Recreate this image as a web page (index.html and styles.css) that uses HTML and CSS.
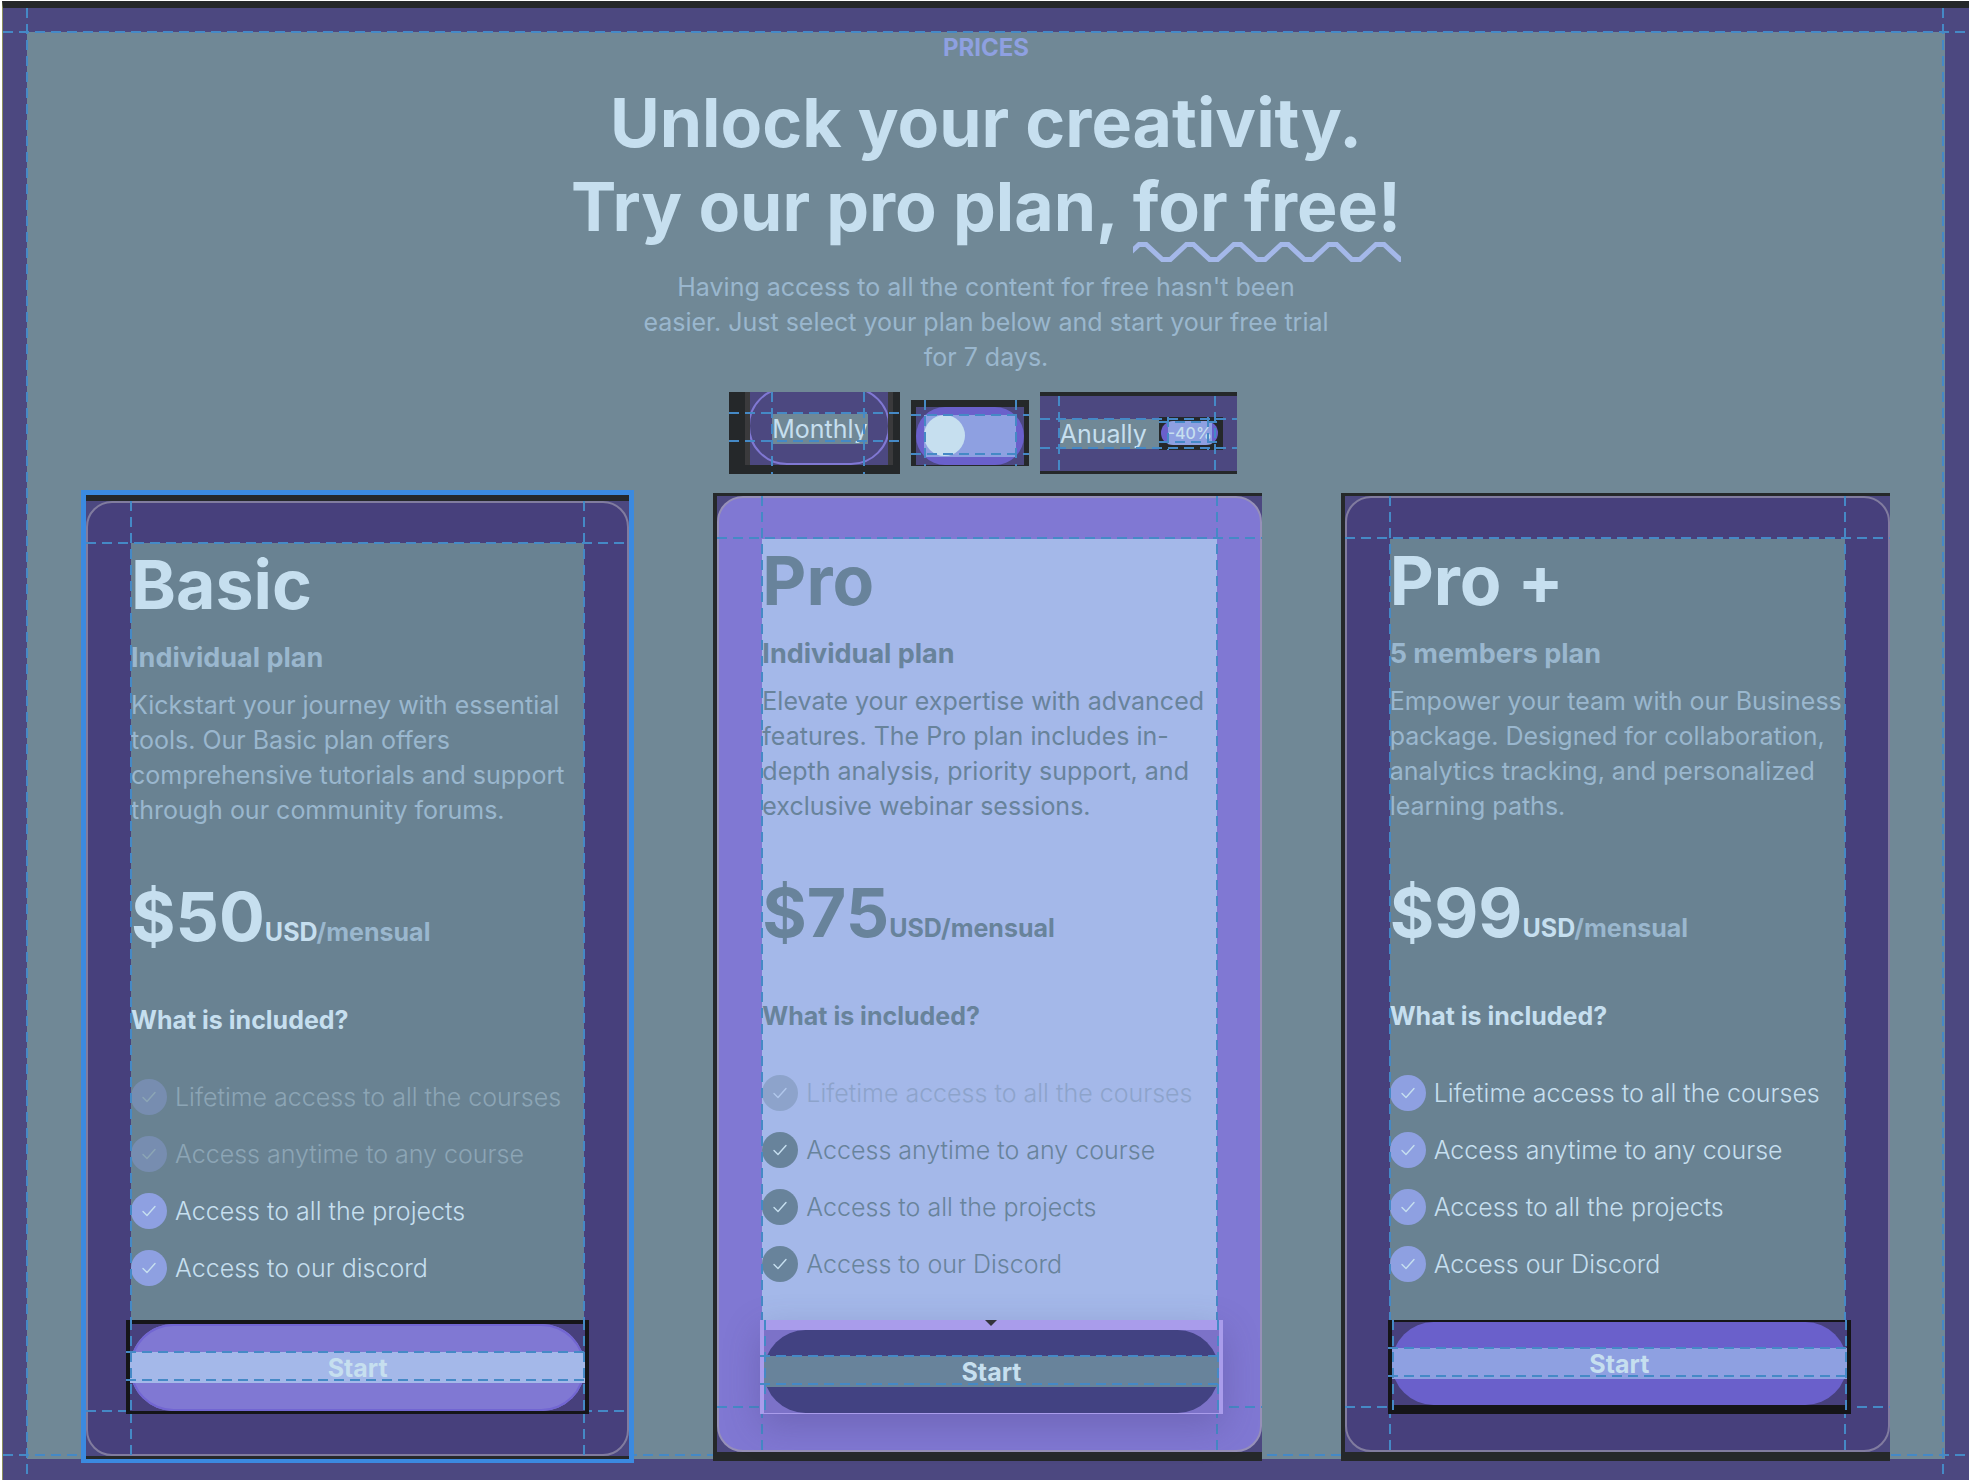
FILE: index.html
```html
<!DOCTYPE html>
<html lang="en">
<head>
<meta charset="utf-8">
<title>Prices</title>
<link rel="stylesheet" href="styles.css">
</head>
<body>
<svg class="defs" aria-hidden="true"><symbol id="check" viewBox="0 0 36 36"><path d="M12 18.5l4 4 8-9" fill="none" stroke="currentColor" stroke-width="1.4" stroke-linecap="round" stroke-linejoin="round"/></symbol></svg>
<main class="page guided">
  <div class="stage">
    <header class="intro">
      <p class="eyebrow">PRICES</p>
      <h1 class="headline">Unlock your creativity.<br>Try our pro plan, <span class="wavy">for free!<svg class="wave" viewBox="0 0 266 20" preserveAspectRatio="none" aria-hidden="true"><path d="M-18 17.500H-10L6 2.500H13L29 17.500H37L53 2.500H60L76 17.500H84L100 2.500H107L123 17.500H131L147 2.500H154L170 17.500H178L194 2.500H202L217 17.500H225L241 2.500H249L265 17.500H273" fill="none" stroke="#a4b8e9" stroke-width="5"/></svg></span></h1>
      <p class="lead">Having access to all the content for free hasn't been easier. Just select your plan below and start your free trial for 7 days.</p>
    </header>

    <div class="billing">
      <button type="button" class="period period-monthly guided"><span class="period-back"><span class="period-ring"><span class="period-text">Monthly</span></span></span></button>
      <label class="switch guided"><span class="switch-back"><span class="switch-pill"><input type="checkbox" class="switch-input" aria-label="Bill annually"></span></span></label>
      <button type="button" class="period period-annual guided"><span class="period-text">Anually</span><span class="badge guided"><span class="badge-pill">-40%</span></span></button>
    </div>

    <div class="plans">
      <article class="plan plan-basic">
        <div class="plan-back guided"><div class="plan-card">
          <div class="content">
            <h2 class="name">Basic</h2>
            <p class="kind">Individual plan</p>
            <p class="about">Kickstart your journey with essential tools. Our Basic plan offers comprehensive tutorials and support through our community forums.</p>
            <p class="price">$50<span class="currency">USD</span><span class="term">/mensual</span></p>
            <h3 class="included">What is included?</h3>
            <ul class="features">
              <li class="off"><svg class="tick"><use href="#check"/></svg>Lifetime access to all the courses</li>
              <li class="off"><svg class="tick"><use href="#check"/></svg>Access anytime to any course</li>
              <li><svg class="tick"><use href="#check"/></svg>Access to all the projects</li>
              <li><svg class="tick"><use href="#check"/></svg>Access to our discord</li>
            </ul>
          </div>
          <div class="action guided"><div class="action-back"><button type="button" class="start"><span class="start-text">Start</span></button></div></div>
        </div></div>
      </article>

      <article class="plan plan-pro">
        <div class="plan-back guided"><div class="plan-card">
          <div class="content">
            <h2 class="name">Pro</h2>
            <p class="kind">Individual plan</p>
            <p class="about">Elevate your expertise with advanced features. The Pro plan includes in-depth analysis, priority support, and exclusive webinar sessions.</p>
            <p class="price">$75<span class="currency">USD</span><span class="term">/mensual</span></p>
            <h3 class="included">What is included?</h3>
            <ul class="features">
              <li class="off"><svg class="tick"><use href="#check"/></svg>Lifetime access to all the courses</li>
              <li><svg class="tick"><use href="#check"/></svg>Access anytime to any course</li>
              <li><svg class="tick"><use href="#check"/></svg>Access to all the projects</li>
              <li><svg class="tick"><use href="#check"/></svg>Access to our Discord</li>
            </ul>
          </div>
          <div class="action guided"><div class="action-back"><button type="button" class="start"><span class="start-text">Start</span></button></div></div>
        </div></div>
      </article>

      <article class="plan plan-plus">
        <div class="plan-back guided"><div class="plan-card">
          <div class="content">
            <h2 class="name">Pro +</h2>
            <p class="kind">5 members plan</p>
            <p class="about">Empower your team with our Business package. Designed for collaboration, analytics tracking, and personalized learning paths.</p>
            <p class="price">$99<span class="currency">USD</span><span class="term">/mensual</span></p>
            <h3 class="included">What is included?</h3>
            <ul class="features">
              <li><svg class="tick"><use href="#check"/></svg>Lifetime access to all the courses</li>
              <li><svg class="tick"><use href="#check"/></svg>Access anytime to any course</li>
              <li><svg class="tick"><use href="#check"/></svg>Access to all the projects</li>
              <li><svg class="tick"><use href="#check"/></svg>Access our Discord</li>
            </ul>
          </div>
          <div class="action guided"><div class="action-back"><button type="button" class="start"><span class="start-text">Start</span></button></div></div>
        </div></div>
      </article>
    </div>
  </div>
</main>
</body>
</html>
```

FILE: styles.css
```css
:root {
  --night: #4c4880;
  --slate: #708896;
  --ink: #25282a;
  --ice: #c6dfef;
  --mist: #9ab7ce;
  --sky: #a4b8e9;
  --peri: #8ea0e1;
  --violet: #6a60cb;
  --lilac: #8078d3;
  --guide: #4589c6;
}

* { box-sizing: border-box; }

body {
  margin: 0;
  padding-top: 1px;
  background: #fff;
  color: var(--ice);
  font: 400 25px/35px Inter, "Liberation Sans", sans-serif;
}

h1, h2, h3, p, ul { margin: 0; padding: 0; }
button { font: inherit; color: inherit; border: 0; margin: 0; cursor: pointer; }
.defs { position: absolute; width: 0; height: 0; }

/* Dashed layout guides, drawn over the element they belong to */
.guided { position: relative; }
.guided::after {
  content: "";
  position: absolute;
  inset: 0;
  pointer-events: none;
  --across: repeating-linear-gradient(90deg, var(--guide) 0 10px, transparent 10px 16px);
  --down: repeating-linear-gradient(180deg, var(--guide) 0 10px, transparent 10px 16px);
  background:
    var(--across) 0 var(--t) / 100% 2px no-repeat,
    var(--across) 0 calc(100% - var(--b)) / 100% 2px no-repeat,
    var(--down) var(--l) 0 / 2px 100% no-repeat,
    var(--down) calc(100% - var(--r)) 0 / 2px 100% no-repeat;
}

.page {
  --t: 23px; --b: 24px; --l: 23px; --r: 25px;
  min-height: calc(100vh - 1px);
  margin: 0 1px 0 2px;
  padding: 24px 24px 21px;
  border: solid #8c905f;
  border-width: 0 0 0 1px;
  background: var(--night);
  border-top: 7px solid var(--ink);
}
.page::after { z-index: 1; }

.stage { display: flow-root; background: var(--slate); }

.intro { text-align: center; }
.eyebrow { color: var(--peri); font-size: 24px; line-height: 32px; font-weight: 700; }
.headline { margin-top: 16px; font-size: 68px; line-height: 84px; font-weight: 700; }
.wavy { position: relative; }
.wave { position: absolute; left: 0; bottom: -15px; width: 100%; height: 20px; overflow: hidden; }
.lead { max-width: 700px; margin: 22px auto 0; color: var(--mist); }

.billing {
  display: flex;
  justify-content: center;
  align-items: flex-start;
  gap: 11px;
  margin-top: 17px;
  padding-right: 6px;
}
.period { display: flex; height: 82px; }
.period-text { background: var(--slate); line-height: 30px; height: 30px; }
.period-monthly {
  --t: 20px; --b: 32px; --l: 42px; --r: 35px;
  padding: 0 7px 9px 16px;
  background: var(--ink);
}
.period-back {
  display: flex;
  height: 73px;
  background: var(--night);
  border: solid #3a3a3c;
  border-width: 0 5px;
  overflow: hidden;
}
.period-ring {
  margin: -5px -2px 0;
  padding: 23px 20px 25px 22px;
  border: 2px solid var(--lilac);
  border-radius: 40px;
}
.period-annual {
  --t: 22px; --b: 22px; --l: 18px; --r: 21px;
  padding: 23px 14px 0 20px;
  background: var(--night);
  border: solid var(--ink);
  border-width: 4px 0 3px;
}
.period-annual .period-text { width: 99px; text-align: left; }
.badge {
  --t: 4px; --b: 7px; --l: 8px; --r: 14px;
  height: 33px;
  margin-top: -2px;
  padding: 4px 5px 4px 2px;
  background: var(--ink);
}
.badge-pill {
  display: block;
  padding: 0 6px 0 7px;
  border-radius: 12px;
  background: linear-gradient(90deg, var(--violet) 7px, var(--peri) 7px calc(100% - 6px), var(--violet) calc(100% - 6px));
  font-size: 16px;
  line-height: 24px;
  font-weight: 500;
}

.switch {
  --t: 14px; --b: 11px; --l: 13px; --r: 12px;
  display: block;
  margin-top: 8px;
  padding: 7px 5px 1px;
  background: var(--ink);
}
.switch-back { display: block; background: var(--night); }
.switch-pill { display: block; padding: 8px; border-radius: 29px; background: var(--violet); }
.switch-input {
  appearance: none;
  display: block;
  width: 92px;
  height: 42px;
  margin: 0;
  background: var(--peri);
}
.switch-input::before {
  content: "";
  display: block;
  width: 41px;
  height: 41px;
  border-radius: 50%;
  background: var(--ice);
}
.switch-input:checked::before { margin-left: auto; }

.plans {
  position: relative;
  z-index: 2;
  display: grid;
  grid-template-columns: 553fr 548fr 549fr;
  align-items: start;
  column-gap: 79px;
  margin: 16px 0 -4px;
  padding: 0 55px 0 54px;
}
.plan { background: var(--ink); }
.plan-basic { border: 5px solid #3b8ae0; border-bottom-width: 4px; padding: 6px 0 3px; }
.plan-pro, .plan-plus { margin-top: 3px; padding: 3px 0 9px 4px; }

.plan-back { --t: 41px; --b: 44px; --l: 44px; --r: 44px; background: var(--night); }
.plan-card { padding: 40px 43px; border: 2px solid #817c9f; border-radius: 26px; background: #47407c; }
.plan-pro .plan-card { background: var(--lilac); border-color: #9690b8; }
.plan-pro .plan-card, .plan-plus .plan-card { padding: 41px 43px 36px; }

.content { padding-bottom: 34px; background: #698292; }
.plan-pro .content, .plan-plus .content { padding-bottom: 38px; }
.plan-pro .content { background: var(--sky); color: #68839b; }

.name { font-size: 68px; line-height: 82px; font-weight: 700; }
.kind { margin-top: 16px; font-size: 27px; line-height: 34px; font-weight: 700; color: var(--mist); }
.about { margin-top: 13px; color: var(--mist); }
.price { margin-top: 46px; font-size: 68px; line-height: 84px; font-weight: 700; }
.currency, .term { font-size: 25px; line-height: 35px; }
.term { color: var(--mist); }
.plan-pro .kind, .plan-pro .about, .plan-pro .term { color: inherit; }
.included { margin-top: 47px; font-size: 25px; line-height: 30px; font-weight: 700; }

.features { display: grid; gap: 21px; margin-top: 44px; list-style: none; font-weight: 300; }
.features li { display: flex; align-items: center; gap: 8px; line-height: 36px; white-space: nowrap; }
.features .off { opacity: .38; }
.tick { width: 36px; height: 36px; border-radius: 50%; background: var(--peri); color: var(--ice); flex: none; }
.plan-pro .tick { background: #68839b; }

.action {
  --t: 31px; --b: 33px; --l: 4px; --r: 4px;
  z-index: 1;
  margin: 0 -5px;
  padding: 4px 4px 3px;
  background: #151518;
}
.action-back { background: #47407c; }
.start {
  display: block;
  width: 100%;
  padding: 28px 0;
  border-radius: 44px;
  background: var(--lilac);
  box-shadow: inset 0 0 0 2px #7266d2;
  font-weight: 700;
}
.start-text { display: block; height: 31px; background: var(--sky); line-height: 33px; }

.plan-pro .action {
  --t: 35px; --b: 29px;
  margin: 0 -6px 0 -2px;
  padding: 10px 4px 1px;
  background: #a99ceb;
  box-shadow: 0 12px 36px rgba(70, 60, 120, .3);
}
.plan-pro .action::before {
  content: "";
  position: absolute;
  top: 0;
  left: 50%;
  margin-left: -6px;
  border: 6px solid transparent;
  border-top-color: #33333c;
  border-bottom: 0;
}
.plan-pro .action-back { background: #7c72c8; }
.plan-pro .start { padding: 26px 0; background: #424282; box-shadow: none; }
.plan-pro .start-text { background: #68839b; }

.plan-plus .action { --t: 27px; --b: 37px; margin: 0 -6px 0 -2px; padding: 2px 4px 9px; }
.plan-plus .start { padding: 26px 0; background: var(--violet); box-shadow: none; }
.plan-plus .start-text { background: var(--peri); }
```
